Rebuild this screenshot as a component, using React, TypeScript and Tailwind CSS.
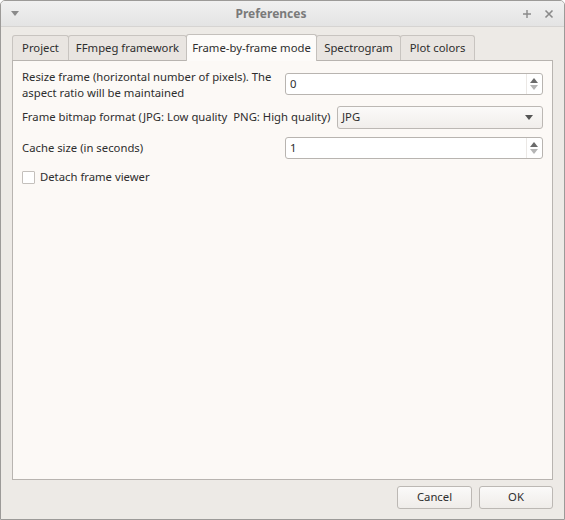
import React from 'react';

const font = { fontFamily: '"Noto Sans", "Open Sans", sans-serif' };

const SpinArrows = () => (
  <div className="flex flex-col items-center justify-center w-[14px] h-full gap-[2px]">
    <svg width="8" height="5" viewBox="0 0 8 5"><path d="M0 5 L4 0 L8 5 Z" fill="#6b6b6b" /></svg>
    <svg width="8" height="5" viewBox="0 0 8 5"><path d="M0 0 L4 5 L8 0 Z" fill="#b5b5b5" /></svg>
  </div>
);

const SpinBox = ({ value, className = '' }: { value: string; className?: string }) => (
  <div className={`flex items-center h-[22px] w-[258px] border border-[#b8b4b0] rounded-[3px] bg-white pl-[4px] pr-[1px] ${className}`}>
    <span className="flex-1 text-[11.3px] text-[#2e2e2e]">{value}</span>
    <div className="h-full border-l border-[#ebe8e5] flex items-center">
      <SpinArrows />
    </div>
  </div>
);

const tabs = ['Project', 'FFmpeg framework', 'Frame-by-frame mode', 'Spectrogram', 'Plot colors'];
const tabWidths = ['w-[57px]', 'w-[119px]', 'w-[131px]', 'w-[85px]', 'w-[75px]'];

export default function App() {
  return (
    <div style={font} className="w-[565px] h-[520px] bg-[#edeae6] border border-[#9c9a98] rounded-t-[5px] overflow-hidden flex flex-col text-[#2e2e2e]">
      {/* Title bar */}
      <div className="h-[26px] flex items-center px-[9px] bg-gradient-to-b from-[#f0f0f0] to-[#e4e4e4] border-b border-[#d6d4d2]">
        <svg width="10" height="6" viewBox="0 0 10 6"><path d="M1 0 L9 0 L5 5 Z" fill="#8a8a8a" /></svg>
        <div className="flex-1 text-center text-[12px] font-bold text-[#7a7a7a]">Preferences</div>
        <svg width="10" height="10" viewBox="0 0 10 10" className="mr-[12px]">
          <path d="M5 1 V9 M1 5 H9" stroke="#8a8a8a" strokeWidth="1.4" />
        </svg>
        <svg width="10" height="10" viewBox="0 0 10 10" className="mr-[1px]">
          <path d="M1.5 1.5 L8.5 8.5 M8.5 1.5 L1.5 8.5" stroke="#8a8a8a" strokeWidth="1.6" />
        </svg>
      </div>

      <div className="flex-1 flex flex-col px-[11px] pt-[6px] pb-[10px]">
        {/* Tabs */}
        <div className="flex items-end h-[27px]">
          {tabs.map((t, i) => {
            const sel = i === 2;
            return (
              <div
                key={t}
                className={
                  `${tabWidths[i]} flex items-center justify-center text-[11.3px] rounded-t-[3px] border border-b-0 ` +
                  (sel
                    ? 'h-[27px] bg-[#fdfbf9] border-[#c4c0bc] relative top-[1px] z-10 -ml-[1px]'
                    : 'h-[25px] bg-[#e9e5e1] border-[#c8c4c0] -ml-[1px] first:ml-0')
                }
              >
                {t}
              </div>
            );
          })}
        </div>

        {/* Panel */}
        <div className="flex-1 bg-[#fcf9f6] border border-[#b8b4b0] pl-[9px] pr-[9px] pt-[8px] flex flex-col">
          <div className="flex items-start justify-between">
            <div className="text-[11.3px] leading-[16px] w-[258px]">
              Resize frame (horizontal number of pixels). The aspect ratio will be maintained
            </div>
            <SpinBox value="0" className="mt-[4px]" />
          </div>
          <div className="flex items-center justify-between mt-[5px]">
            <div className="text-[11.3px] whitespace-nowrap">Frame bitmap format (JPG: Low quality&nbsp; PNG: High quality)</div>
            <div className="flex items-center h-[23px] w-[206px] border border-[#bcb8b4] rounded-[3px] bg-gradient-to-b from-[#fbfaf9] to-[#f1eeeb] pl-[4px] pr-[9px]">
              <span className="flex-1 text-[11.3px]">JPG</span>
              <svg width="8" height="5" viewBox="0 0 8 5"><path d="M0 0 L8 0 L4 5 Z" fill="#555" /></svg>
            </div>
          </div>
          <div className="flex items-center justify-between mt-[8px]">
            <div className="text-[11.3px]">Cache size (in seconds)</div>
            <SpinBox value="1" />
          </div>
          <div className="flex items-center mt-[10px]">
            <div className="w-[13px] h-[13px] border border-[#c4c0bc] bg-white rounded-[1px]" />
            <span className="text-[11.3px] ml-[5px]">Detach frame viewer</span>
          </div>
        </div>

        {/* Buttons */}
        <div className="flex justify-end gap-[7px] mt-[6px]">
          <div className="w-[75px] h-[23px] flex items-center justify-center text-[11.3px] border border-[#bcb8b4] rounded-[3px] bg-gradient-to-b from-[#fbfaf9] to-[#efece9]">Cancel</div>
          <div className="w-[74px] h-[23px] flex items-center justify-center text-[11.3px] border border-[#bcb8b4] rounded-[3px] bg-gradient-to-b from-[#fbfaf9] to-[#efece9]">OK</div>
        </div>
      </div>
    </div>
  );
}
